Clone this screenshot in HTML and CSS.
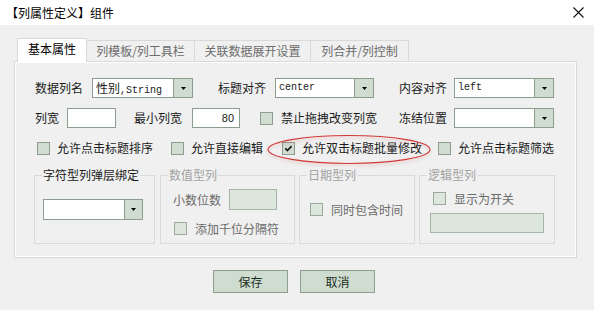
FILE: index.html
```html
<!DOCTYPE html>
<html lang="zh">
<head>
<meta charset="utf-8">
<link rel="stylesheet" href="styles.css">
</head>
<body>
<div class="titlebar">
  <span class="title">【列属性定义】组件</span>
  <svg class="close" viewBox="0 0 11 11" width="11" height="11"><path d="M0.5 0.5 L10.5 10.5 M10.5 0.5 L0.5 10.5" stroke="#111" stroke-width="1.1" fill="none"/></svg>
</div>
<div class="dialog">
  <div class="tabs">
    <div class="tab tab-active">基本属性</div>
    <div class="tab tab-2">列模板/列工具栏</div>
    <div class="tab tab-3">关联数据展开设置</div>
    <div class="tab tab-4">列合并/列控制</div>
  </div>
  <div class="panel">
    <div class="row r1">
      <span class="lbl">数据列名</span>
      <div class="combo c-name"><span class="val"><span class="cjk">性别</span>,String</span><span class="dd"><svg width="5" height="3" viewBox="0 0 5 3"><path d="M0 0H5L2.5 3Z" fill="#000"/></svg></span></div>
      <span class="lbl l-title">标题对齐</span>
      <div class="combo c-title"><span class="val">center</span><span class="dd"><svg width="5" height="3" viewBox="0 0 5 3"><path d="M0 0H5L2.5 3Z" fill="#000"/></svg></span></div>
      <span class="lbl l-content">内容对齐</span>
      <div class="combo c-content"><span class="val">left</span><span class="dd"><svg width="5" height="3" viewBox="0 0 5 3"><path d="M0 0H5L2.5 3Z" fill="#000"/></svg></span></div>
    </div>
    <div class="row r2">
      <span class="lbl">列宽</span>
      <div class="input i-width"></div>
      <span class="lbl l-min">最小列宽</span>
      <div class="input i-min">80</div>
      <span class="cb cb-drag"></span>
      <span class="lbl l-drag">禁止拖拽改变列宽</span>
      <span class="lbl l-freeze">冻结位置</span>
      <div class="combo c-freeze"><span class="val"></span><span class="dd"><svg width="5" height="3" viewBox="0 0 5 3"><path d="M0 0H5L2.5 3Z" fill="#000"/></svg></span></div>
    </div>
    <div class="row r3">
      <span class="cb cb-sort"></span>
      <span class="lbl l-cb">允许点击标题排序</span>
      <span class="cb cb-edit"></span>
      <span class="lbl l-cb">允许直接编辑</span>
      <span class="mark">
        <span class="cb cb-checked"><svg width="11" height="11" viewBox="0 0 11 11"><path d="M2.3 5.4 L4.4 7.6 L8.6 3.2" stroke="#1a1a1a" stroke-width="1.7" fill="none"/></svg></span>
        <span class="lbl l-cb">允许双击标题批量修改</span>
        <svg class="ellipse" width="166" height="32" viewBox="0 0 166 32"><ellipse cx="82" cy="15.5" rx="81" ry="14" fill="none" stroke="#d23a3a" stroke-width="1.1"/></svg>
      </span>
      <span class="cb cb-filter"></span>
      <span class="lbl l-cb">允许点击标题筛选</span>
    </div>
    <div class="groups">
      <div class="grp g1">
        <span class="legend legend-on">字符型列弹层绑定</span>
        <div class="combo c-bind"><span class="val"></span><span class="dd"><svg width="5" height="3" viewBox="0 0 5 3"><path d="M0 0H5L2.5 3Z" fill="#000"/></svg></span></div>
      </div>
      <div class="grp g2">
        <span class="legend">数值型列</span>
        <div class="grow">
          <span class="lbl off">小数位数</span>
          <div class="input off-input i-dec"></div>
        </div>
        <div class="grow grow-cb">
          <span class="cb cb-off"></span>
          <span class="lbl off l-cb">添加千位分隔符</span>
        </div>
      </div>
      <div class="grp g3">
        <span class="legend">日期型列</span>
        <div class="grow grow-cb">
          <span class="cb cb-off"></span>
          <span class="lbl off l-cb">同时包含时间</span>
        </div>
      </div>
      <div class="grp g4">
        <span class="legend">逻辑型列</span>
        <div class="grow grow-cb g4-cb">
          <span class="cb cb-off"></span>
          <span class="lbl off l-cb">显示为开关</span>
        </div>
        <div class="input off-input i-switch"></div>
      </div>
    </div>
  </div>
</div>
<div class="actions">
  <button class="btn">保存</button>
  <button class="btn">取消</button>
</div>
</body>
</html>
```
FILE: styles.css
```css
* { box-sizing: border-box; }
html, body { margin: 0; padding: 0; }
body {
  width: 594px;
  height: 310px;
  overflow: hidden;
  background: #f0f0f0;
  font-family: "Noto Sans CJK SC", "Liberation Sans", sans-serif;
  font-size: 12px;
  line-height: 16px;
  color: #1a1a1a;
}
.titlebar {
  height: 25px;
  background: #fff;
  display: flex;
  align-items: center;
  justify-content: space-between;
  padding: 0 10px 0 6px;
}
.title { color: #000; }
.close { display: block; }

.dialog { padding: 13px 0 0 14px; }
.tabs {
  display: flex;
  align-items: flex-end;
  height: 23px;
  padding-left: 3px;
}
.tab {
  height: 21px;
  border: 1px solid #d9d9d9;
  border-bottom: none;
  margin-left: -1px;
  background: #f0f0f0;
  color: #6d6d6d;
  display: flex;
  align-items: center;
  justify-content: center;
  padding-bottom: 1px;
}
.tab-active {
  height: 24px;
  width: 70px;
  margin-left: 0;
  margin-bottom: -1px;
  background: #fff;
  color: #000;
  position: relative;
  z-index: 1;
  padding-bottom: 4px;
}
.tab-2 { width: 109px; }
.tab-3 { width: 117px; }
.tab-4 { width: 99px; }

.panel {
  width: 563px;
  height: 197px;
  border: 1px solid #d9d9d9;
  box-shadow: inset 1px 1px 0 #fff, inset -1px -1px 0 #fff;
  padding: 16px 0 0 20px;
}
.row { display: flex; align-items: center; height: 20px; }
.r2, .r3 { margin-top: 10px; }
.lbl { white-space: nowrap; }

.combo {
  display: flex;
  height: 20px;
  border: 1px solid #8d9d8d;
  background: #fff;
}
.combo .val {
  flex: 1;
  padding-left: 3px;
  font-family: "Liberation Mono", monospace;
  font-size: 10px;
  line-height: 18px;
  white-space: nowrap;
  overflow: hidden;
}
.combo .cjk { font-family: "Noto Sans CJK SC", sans-serif; font-size: 12px; }
.combo .dd {
  width: 19px;
  border-left: 1px solid #8d9d8d;
  background: #cfdccf;
  display: flex;
  align-items: center;
  justify-content: center;
}
.combo .dd svg { display: block; }
.c-name { width: 101px; margin-left: 9px; }
.l-title { margin-left: 25px; }
.c-title { width: 99px; margin-left: 9px; }
.l-content { margin-left: 25px; }
.c-content { width: 100px; margin-left: 7px; }

.input {
  height: 20px;
  border: 1px solid #8d9d8d;
  background: #fff;
  font-family: "Liberation Sans", sans-serif;
  font-size: 11px;
  line-height: 18px;
  text-align: right;
  padding-right: 5px;
}
.i-width { width: 49px; margin-left: 8px; }
.l-min { margin-left: 18px; }
.i-min { width: 48px; margin-left: 10px; }
.cb-drag { margin-left: 20px; }
.l-drag { margin-left: 8px; }
.l-freeze { margin-left: 22px; }
.c-freeze { width: 100px; margin-left: 7px; }

.cb {
  width: 13px;
  height: 13px;
  flex: none;
  border: 1px solid #8d9d8d;
  background: #d0ddd0;
  display: flex;
  align-items: center;
  justify-content: center;
}
.cb svg { display: block; }
.l-cb { margin-left: 7px; }
.cb-sort { margin-left: 2px; }
.cb-edit { margin-left: 18px; }
.mark {
  position: relative;
  display: flex;
  align-items: center;
  margin-left: 19px;
}
.ellipse {
  position: absolute;
  left: -15px;
  top: -6px;
  filter: drop-shadow(0 2px 1.5px rgba(210, 60, 60, 0.28));
  pointer-events: none;
}
.cb-filter { margin-left: 16px; }

.groups { display: flex; margin-top: 17px; margin-left: -1px; }
.grp {
  position: relative;
  height: 69px;
  border: 1px solid #dadada;
}
.legend {
  position: absolute;
  top: -9px;
  left: 7px;
  padding: 0 1px;
  background: #f0f0f0;
  color: #a3a3a3;
  white-space: nowrap;
}
.legend-on { color: #1a1a1a; }
.g1 { width: 121px; padding: 23px 0 0 8px; }
.g2 { width: 135px; margin-left: 5px; padding: 13px 0 0 12px; }
.g3 { width: 116px; margin-left: 4px; padding: 26px 0 0 10px; }
.g4 { width: 136px; margin-left: 4px; padding: 15px 0 0 10px; }
.c-bind { width: 100px; height: 21px; }
.c-bind .dd { width: 18px; }
.grow { display: flex; align-items: center; height: 21px; }
.grow-cb { height: 15px; }
.g2 .grow-cb { margin-top: 11px; padding-left: 1px; }
.g4-cb { padding-left: 3px; }
.off { color: #6a6a6a; }
.l-cb.off { margin-left: 8px; }
.cb-off { background: #dce6dc; border-color: #9aaa9a; }
.off-input { background: #dce6dc; border-color: #a6b6a6; }
.i-dec { width: 48px; height: 21px; margin-left: 8px; }
.i-switch { width: 114px; margin-top: 7px; }

.actions {
  display: flex;
  justify-content: center;
  gap: 12px;
  margin-top: 12px;
  padding-right: 6px;
}
.btn {
  width: 75px;
  height: 23px;
  border: 1px solid #8d9d8e;
  background: #cfddd0;
  color: #1c2e1c;
  font-family: "Noto Sans CJK SC", sans-serif;
  font-size: 12px;
  line-height: 16px;
  padding: 0;
  margin: 0;
}
```
